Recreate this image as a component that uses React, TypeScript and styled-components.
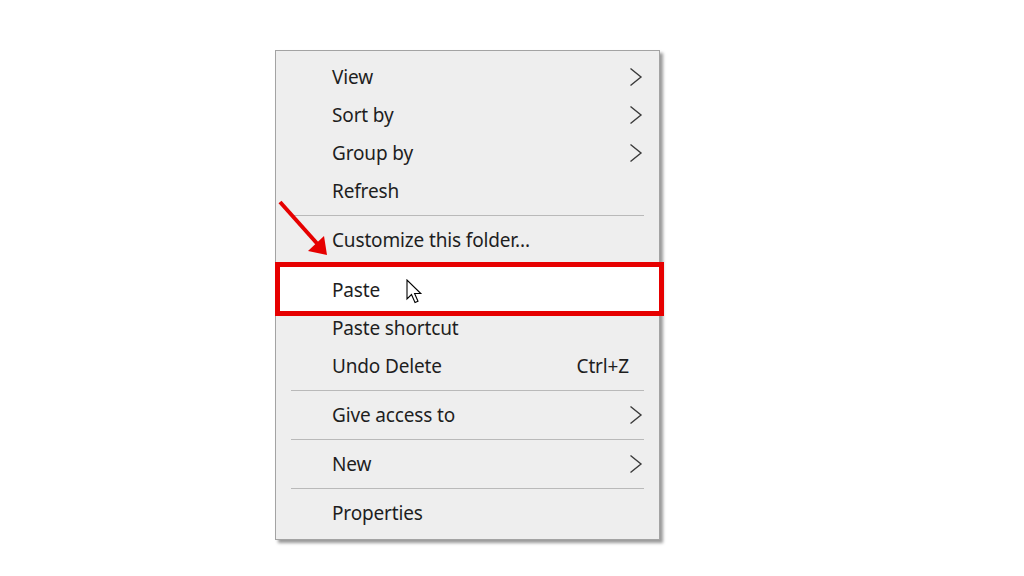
import React from "react";
import styled, { createGlobalStyle } from "styled-components";

const Global = createGlobalStyle`
  html, body { margin: 0; padding: 0; background: #ffffff; }
  body { width: 1024px; height: 576px; overflow: hidden; font-family: "Noto Sans", "Open Sans", "Liberation Sans", sans-serif; }
`;

const Page = styled.div`
  padding: 50px 0 0 275px;
`;

const Menu = styled.div`
  position: relative;
  width: 383px;
  background: #eeeeee;
  border: 1px solid #a3a3a3;
  box-shadow: 3px 3px 3px rgba(0, 0, 0, 0.4);
  padding: 7px 0 7px;
  display: flex;
  flex-direction: column;
`;

const Row = styled.div<{ $gapTop?: number }>`
  position: relative;
  height: 38px;
  margin-top: ${(p) => p.$gapTop ?? 0}px;
  display: flex;
  align-items: center;
  padding: 0 16px 0 56px;
  font-size: 19px;
  color: #1e1e1e;
`;

const Label = styled.span`
  position: relative;
  z-index: 1;
  flex: 1;
  letter-spacing: -0.15px;
`;

const Shortcut = styled.span`
  position: relative;
  z-index: 1;
  margin-right: 14px;
  letter-spacing: -0.15px;
`;

const Separator = styled.div`
  height: 1px;
  background: #b9b9b9;
  margin: 5px 15px 5px;
`;

const Highlight = styled.div`
  position: absolute;
  top: -9px;
  bottom: -7px;
  left: -1px;
  right: -5px;
  background: #ffffff;
  border: 5px solid #e60000;
  z-index: 0;
`;

const Cursor = styled.svg`
  position: absolute;
  left: 130px;
  top: 8px;
  z-index: 2;
`;

const Arrow = styled.svg`
  position: absolute;
  left: -6px;
  top: 144px;
  z-index: 3;
`;

const Chevron = () => (
  <svg width="14" height="20" viewBox="0 0 14 20" style={{ position: "relative", zIndex: 1 }}>
    <polyline points="1.5,1.5 12,10 1.5,18.5" fill="none" stroke="#3a3a3a" strokeWidth="1.4" />
  </svg>
);

export default function App() {
  return (
    <>
      <Global />
      <Page>
        <Menu>
          <Row>
            <Label>View</Label>
            <Chevron />
          </Row>
          <Row>
            <Label>Sort by</Label>
            <Chevron />
          </Row>
          <Row>
            <Label>Group by</Label>
            <Chevron />
          </Row>
          <Row>
            <Label>Refresh</Label>
          </Row>
          <Separator />
          <Row>
            <Label>Customize this folder...</Label>
          </Row>
          <Row $gapTop={12}>
            <Highlight />
            <Label>Paste</Label>
            <Cursor width="18" height="26" viewBox="0 0 18 26">
              <path
                d="M1 1 L1 20 L5.5 15.5 L9 23.5 L12 22.2 L8.6 14.5 L14.8 14.5 Z"
                fill="#ffffff"
                stroke="#000000"
                strokeWidth="1.1"
                strokeLinejoin="miter"
              />
            </Cursor>
          </Row>
          <Row>
            <Label>Paste shortcut</Label>
          </Row>
          <Row>
            <Label>Undo Delete</Label>
            <Shortcut>Ctrl+Z</Shortcut>
          </Row>
          <Separator />
          <Row>
            <Label>Give access to</Label>
            <Chevron />
          </Row>
          <Separator />
          <Row>
            <Label>New</Label>
            <Chevron />
          </Row>
          <Separator />
          <Row>
            <Label>Properties</Label>
          </Row>
          <Arrow width="70" height="70" viewBox="0 0 70 70">
            <line x1="10" y1="7" x2="52" y2="54" stroke="#e60000" strokeWidth="4" />
            <polygon points="57,60 54,41 38,56" fill="#e60000" />
          </Arrow>
        </Menu>
      </Page>
    </>
  );
}
